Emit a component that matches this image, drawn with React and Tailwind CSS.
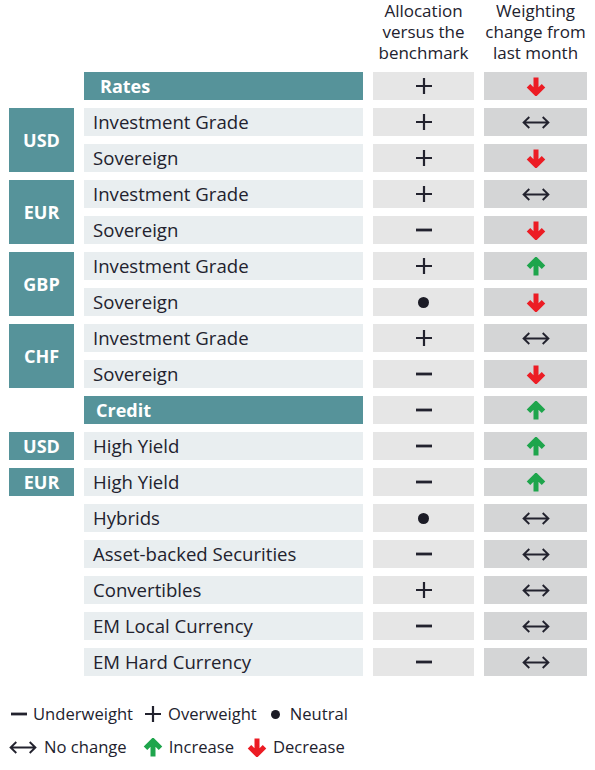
const rows = [
  { cur: null, items: [{ label: 'Rates', head: true, pad: 'pl-[16px]', a: 'plus', w: 'down' }] },
  { cur: 'USD', items: [{ label: 'Investment Grade', a: 'plus', w: 'same' }, { label: 'Sovereign', a: 'plus', w: 'down' }] },
  { cur: 'EUR', items: [{ label: 'Investment Grade', a: 'plus', w: 'same' }, { label: 'Sovereign', a: 'minus', w: 'down' }] },
  { cur: 'GBP', items: [{ label: 'Investment Grade', a: 'plus', w: 'up' }, { label: 'Sovereign', a: 'dot', w: 'down' }] },
  { cur: 'CHF', items: [{ label: 'Investment Grade', a: 'plus', w: 'same' }, { label: 'Sovereign', a: 'minus', w: 'down' }] },
  { cur: null, items: [{ label: 'Credit', head: true, pad: 'pl-[12px]', a: 'minus', w: 'up' }] },
  { cur: 'USD', items: [{ label: 'High Yield', a: 'minus', w: 'up' }] },
  { cur: 'EUR', items: [{ label: 'High Yield', a: 'minus', w: 'up' }] },
  {
    cur: null,
    items: [
      { label: 'Hybrids', a: 'dot', w: 'same' },
      { label: 'Asset-backed Securities', a: 'minus', w: 'same' },
      { label: 'Convertibles', a: 'plus', w: 'same' },
      { label: 'EM Local Currency', a: 'minus', w: 'same' },
      { label: 'EM Hard Currency', a: 'minus', w: 'same' },
    ],
  },
]

function Plus() {
  return (
    <svg width="16" height="16" viewBox="0 0 16 16">
      <path d="M8 0V16M0 8H16" stroke="#22222e" strokeWidth="2.2" />
    </svg>
  )
}

function Minus() {
  return (
    <svg width="16" height="16" viewBox="0 0 16 16">
      <path d="M0 8H16" stroke="#22222e" strokeWidth="2.8" />
    </svg>
  )
}

function Dot() {
  return <span className="block w-[11px] h-[11px] rounded-full bg-[#1c1c26]" />
}

function Same() {
  return (
    <svg width="28" height="13" viewBox="0 0 28 13">
      <path d="M1.5 6.5H26.5M7.3 1L1.6 6.5L7.3 12M20.7 1L26.4 6.5L20.7 12" stroke="#22222e" strokeWidth="1.9" fill="none" />
    </svg>
  )
}

function Arrow({ up }) {
  const color = up ? '#1ea54c' : '#ec1c24'
  return (
    <svg width="20" height="19" viewBox="0 0 20 19" style={{ transform: up ? 'rotate(180deg)' : 'none' }}>
      <path d="M10 0.5V16M2.5 8.8L10 16.2L17.5 8.8" stroke={color} strokeWidth="5" fill="none" />
    </svg>
  )
}

function Sym({ kind }) {
  if (kind === 'plus') return <Plus />
  if (kind === 'minus') return <Minus />
  if (kind === 'dot') return <Dot />
  if (kind === 'same') return <Same />
  if (kind === 'up') return <Arrow up />
  return <Arrow />
}

export default function App() {
  return (
    <div
      className="w-[595px] h-[770px] bg-white pl-[9px] text-[#22222e]"
      style={{ fontFamily: '"Open Sans", "Noto Sans", sans-serif' }}
    >
      {/* column headers */}
      <div className="flex gap-[10px] h-[72px]">
        <div className="w-[354px]" />
        <div className="w-[101px] text-center text-[17px] leading-[21px]">
          Allocation
          <br />
          versus the
          <br />
          benchmark
        </div>
        <div className="w-[103px] text-center text-[17px] leading-[21px] whitespace-nowrap">
          Weighting
          <br />
          change from
          <br />
          last month
        </div>
      </div>

      <div className="flex flex-col gap-[8px]">
        {rows.map((g, gi) => (
          <div key={gi} className="flex gap-[10px]">
            {g.cur ? (
              <div className="w-[65px] bg-[#56939a] text-white font-bold text-[18px] flex items-center justify-center">
                {g.cur}
              </div>
            ) : (
              <div className="w-[65px]" />
            )}
            <div className="flex flex-col gap-[8px]">
              {g.items.map((r, ri) => (
                <div key={ri} className="flex gap-[10px] h-[28px]">
                  <div
                    className={
                      r.head
                        ? `w-[279px] flex items-center bg-[#56939a] text-white font-bold text-[18px] ${r.pad}`
                        : 'w-[279px] flex items-center bg-[#e9eef0] text-[18.6px] pl-[9px]'
                    }
                  >
                    {r.label}
                  </div>
                  <div className="w-[101px] flex items-center justify-center bg-[#e6e6e6]">
                    <Sym kind={r.a} />
                  </div>
                  <div className="w-[103px] flex items-center justify-center bg-[#d4d5d6]">
                    <Sym kind={r.w} />
                  </div>
                </div>
              ))}
            </div>
          </div>
        ))}
      </div>

      {/* legend */}
      <div className="mt-[26px] flex flex-col gap-[9px] text-[16.6px] leading-[24px]">
        <div className="flex items-center">
          <span className="ml-[2px] mr-[6px]"><Minus /></span>
          <span>Underweight</span>
          <span className="ml-[12px] mr-[7px]"><Plus /></span>
          <span>Overweight</span>
          <span className="ml-[14px] mr-[10px]">
            <span className="block w-[9px] h-[9px] rounded-full bg-[#1c1c26]" />
          </span>
          <span>Neutral</span>
        </div>
        <div className="flex items-center">
          <span className="mr-[7px]"><Same /></span>
          <span>No change</span>
          <span className="ml-[16px] mr-[6px]"><Arrow up /></span>
          <span>Increase</span>
          <span className="ml-[13px] mr-[6px]"><Arrow /></span>
          <span>Decrease</span>
        </div>
      </div>
    </div>
  )
}
